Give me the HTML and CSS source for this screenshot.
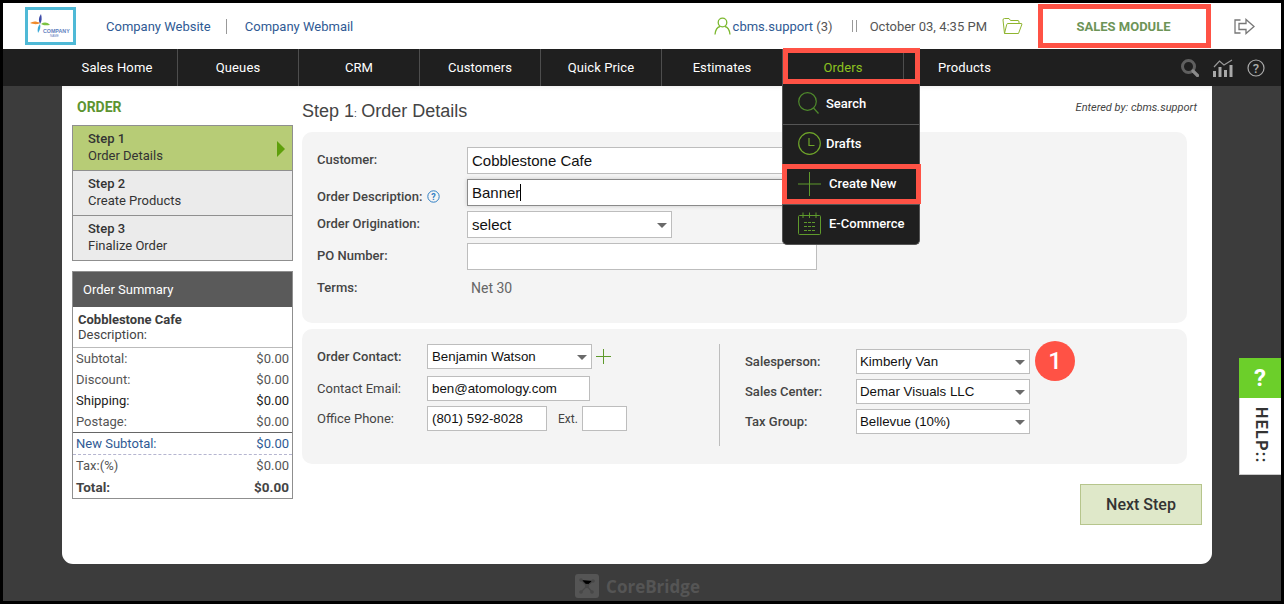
FILE: index.html
```html
<!DOCTYPE html>
<html lang="en">
<head>
<meta charset="utf-8">
<title>Order Details</title>
<link rel="stylesheet" href="styles.css">
</head>
<body>
<div class="app">
  <header class="top">
    <div class="logo">
      <svg width="45" height="32" viewBox="0 0 45 32">
        <path d="M12 14 C10 10 11 7 13 4 C14 8 14 11 12 14Z" fill="#3d4aa8"/>
        <path d="M12 13 C8 11 5 11 2 13 C5 14 9 15 12 13Z" fill="#f08a2c"/>
        <path d="M13 14 C16 12 19 12 22 15 C19 15 16 16 13 14Z" fill="#7cc242"/>
        <path d="M12 14 C13 17 12 20 10 23 C9 19 10 16 12 14Z" fill="#38a9d8"/>
        <text x="15" y="23" class="logo-a">COMPANY</text>
        <text x="22" y="27" class="logo-b">NAME</text>
      </svg>
    </div>
    <nav class="links">
      <a class="link">Company Website</a>
      <span class="link-sep"></span>
      <a class="link">Company Webmail</a>
    </nav>
    <div class="status">
      <svg class="user-ico" width="17" height="18" viewBox="0 0 17 18" fill="none" stroke="#7cb82f" stroke-width="1.3"><circle cx="8.5" cy="5.5" r="4.3"/><path d="M1 17.5 C1.5 12.5 4 10 6 9.5 M16 17.5 C15.5 12.5 13 10 11 9.5"/></svg>
      <span class="user"><span class="user-name">cbms.support</span> (3)</span>
      <span class="bars"></span>
      <span class="date">October 03, 4:35 PM</span>
      <svg class="folder" width="21" height="18" viewBox="0 0 21 18" fill="none" stroke="#8fb52f" stroke-width="1"><path d="M2.5 16.5 L1 3 Q1 1.5 2.5 1.5 H7 L8.500 3.500 H16 Q17 3.500 17 5 V6.500"/><path d="M2.500 16.500 H16.500 L20 7 Q20 6.500 19 6.500 H6 Q5 6.500 4.700 7.500Z"/></svg>
    </div>
    <div class="module">SALES MODULE</div>
    <svg class="exit" width="21" height="17" viewBox="0 0 21 17" fill="none" stroke="#777" stroke-width="1.300"><path d="M6.500 2 H1 V15 H6.500"/><path d="M5 5.500 H12 V1.500 L20 8.500 L12 15.500 V11.500 H5Z"/></svg>
  </header>

  <nav class="nav">
    <div class="nav-item">Sales Home</div>
    <div class="nav-item">Queues</div>
    <div class="nav-item">CRM</div>
    <div class="nav-item">Customers</div>
    <div class="nav-item">Quick Price</div>
    <div class="nav-item">Estimates</div>
    <div class="nav-item nav-active">Orders</div>
    <div class="nav-item nav-last">Products</div>
    <div class="nav-tools">
      <svg width="18" height="18" viewBox="0 0 18 18" fill="none"><circle cx="7.500" cy="7.500" r="6" stroke="#5f5f5f" stroke-width="3"/><path d="M12 12 L16.500 16.500" stroke="#8a8a8a" stroke-width="3.200" stroke-linecap="round"/></svg>
      <svg width="20" height="18" viewBox="0 0 20 18"><path d="M1 8 L6.500 2 L11 6 L19 1" fill="none" stroke="#999" stroke-width="1.200"/><path d="M0 12h3v6H0zM5.500 8h3v10h-3zM11 11h3v7h-3zM16.500 6h3v12h-3z" fill="#a8a8a8"/></svg>
      <svg width="18" height="18" viewBox="0 0 18 18"><circle cx="9" cy="9" r="8" fill="none" stroke="#aaa" stroke-width="1.200"/><text x="9" y="13.500" class="tool-q">?</text></svg>
    </div>
  </nav>

  <div class="stage">
    <main class="panel">
      <aside class="side">
        <h2 class="side-title">ORDER</h2>
        <div class="steps">
          <div class="step step-on"><b>Step 1</b><span>Order Details</span><i class="step-arrow"></i></div>
          <div class="step"><b>Step 2</b><span>Create Products</span></div>
          <div class="step"><b>Step 3</b><span>Finalize Order</span></div>
        </div>
        <section class="summary">
          <h3 class="sum-head">Order Summary</h3>
          <div class="sum-who"><b>Cobblestone Cafe</b><span>Description:</span></div>
          <div class="sum-rows">
            <div class="sum-row"><span>Subtotal:</span><span>$0.00</span></div>
            <div class="sum-row"><span>Discount:</span><span>$0.00</span></div>
            <div class="sum-row sum-dark"><span>Shipping:</span><span>$0.00</span></div>
            <div class="sum-row"><span>Postage:</span><span>$0.00</span></div>
            <div class="sum-row sum-new"><span>New Subtotal:</span><span>$0.00</span></div>
            <div class="sum-row"><span>Tax:(%)</span><span>$0.00</span></div>
            <div class="sum-row sum-total"><span>Total:</span><span>$0.00</span></div>
          </div>
        </section>
      </aside>
      <div class="content">
        <div class="title-row">
          <h1 class="title">Step 1<small>:</small> Order Details</h1>
          <span class="entered">Entered by: cbms.support</span>
        </div>
        <section class="box box-a">
          <div class="frow"><label class="lbl lbl-f">Customer:</label><div class="field f-wide">Cobblestone Cafe</div></div>
          <div class="frow"><label class="lbl lbl-desc">Order Description:<svg class="hint" width="13" height="13" viewBox="0 0 13 13"><circle cx="6.500" cy="6.500" r="5.700" fill="none" stroke="#2f7fc4" stroke-width="1"/><text x="6.500" y="10" class="hint-q">?</text></svg></label><div class="field f-wide f-focus">Banner<i class="caret"></i></div></div>
          <div class="frow"><label class="lbl lbl-f">Order Origination:</label><div class="field f-sel f-orig">select<i class="arrow"></i></div></div>
          <div class="frow"><label class="lbl lbl-f">PO Number:</label><div class="field f-wide"></div></div>
          <div class="frow"><label class="lbl lbl-f">Terms:</label><div class="terms">Net 30</div></div>
        </section>
        <section class="box box-b">
          <div class="col-l">
            <div class="crow"><label class="lbl lbl-c">Order Contact:</label><div class="field sm f-sel f-contact">Benjamin Watson<i class="arrow"></i></div><svg class="plus" width="15" height="15" viewBox="0 0 15 15"><path d="M7.500 0V15M0 7.500H15" stroke="#5f9a2c" stroke-width="1"/></svg></div>
            <div class="crow"><label class="lbl lbl-c lbl-n">Contact Email:</label><div class="field sm f-email">ben@atomology.com</div></div>
            <div class="crow"><label class="lbl lbl-c lbl-n">Office Phone:</label><div class="field sm f-phone">(801) 592-8028</div><span class="ext">Ext.</span><div class="field sm f-ext"></div></div>
          </div>
          <div class="col-r">
            <div class="crow"><label class="lbl lbl-r">Salesperson:</label><div class="field sm f-sel f-right">Kimberly Van<i class="arrow"></i></div></div>
            <div class="crow"><label class="lbl lbl-r">Sales Center:</label><div class="field sm f-sel f-right">Demar Visuals LLC<i class="arrow"></i></div></div>
            <div class="crow"><label class="lbl lbl-r">Tax Group:</label><div class="field sm f-sel f-right">Bellevue (10%)<i class="arrow"></i></div></div>
          </div>
        </section>
        <div class="actions"><button class="next">Next Step</button></div>
      </div>
    </main>
    <footer class="brand">
      <svg width="24" height="24" viewBox="0 0 24 24"><rect width="24" height="24" rx="3" fill="#555"/><g stroke="#474747" stroke-width="1.200"><path d="M6 6L12 12L18 7M12 12L6 18M12 12L17 18"/></g><g fill="#474747"><circle cx="6" cy="6" r="1.800"/><circle cx="18" cy="7" r="1.800"/><circle cx="12" cy="12" r="2.200"/><circle cx="6" cy="18" r="1.800"/><circle cx="17" cy="18" r="1.800"/></g></svg>
      <span>CoreBridge</span>
    </footer>
  </div>

  <div class="menu">
    <div class="menu-item mi-search"><svg width="21" height="22" viewBox="0 0 21 22" fill="none" stroke="#4f8a2c" stroke-width="1.200"><circle cx="9.500" cy="9.500" r="8.800"/><path d="M15.500 16 L20.500 21.500"/></svg><span>Search</span></div>
    <div class="menu-item mi-drafts"><svg width="23" height="23" viewBox="0 0 23 23" fill="none" stroke="#6fa52a" stroke-width="1.200"><circle cx="11.500" cy="11.500" r="10.800"/><path d="M11 6V13.500H16.500"/></svg><span>Drafts</span></div>
    <div class="menu-item mi-wide"><svg width="23" height="24" viewBox="0 0 23 24" fill="none" stroke="#5f9a2c" stroke-width="1"><path d="M11.500 0V24M0 12H23"/></svg><span>Create New</span></div>
    <div class="menu-item mi-wide"><svg width="23" height="23" viewBox="0 0 23 23" fill="none" stroke="#5f9a2c" stroke-width="1"><rect x="0.500" y="3.500" width="22" height="19" rx="1"/><path d="M5 0.500V6M11.500 0.500V6M18 0.500V6"/><path d="M6 10.500h3M10 10.500h3M14 10.500h3M6 14.500h3M10 14.500h3M14 14.500h3M6 18.500h3M10 18.500h3M14 18.500h3"/></svg><span>E-Commerce</span></div>
  </div>

  <div class="mark mark-module"></div>
  <div class="mark mark-orders"></div>
  <div class="mark mark-create"></div>
  <div class="badge">1</div>
  <div class="help"><div class="help-q">?</div><div class="help-t"><span>HELP::</span></div></div>
</div>
</body>
</html>
```
FILE: styles.css
```css
* { box-sizing: border-box; }
html, body { margin: 0; height: 100%; overflow: hidden; }
body { background: #000; font-family: Roboto, "Liberation Sans", sans-serif; }
.app { position: relative; width: 1278px; height: 598px; margin: 3px 0 0 3px; background: #3c3c3c; display: flex; flex-direction: column; }

.top { height: 46px; background: #fff; display: flex; align-items: center; flex: none; }
.logo { width: 51px; height: 38px; margin-left: 22px; border: 3px solid #4fb9d6; display: flex; align-items: center; justify-content: center; background: #fff; }
.logo-a { font: 700 5.300px "Liberation Sans", sans-serif; fill: #5f7fc0; }
.logo-b { font: 3px "Liberation Sans", sans-serif; fill: #5f7fc0; }
.links { display: flex; align-items: center; margin-left: 30px; }
.link { font-size: 13px; color: #2f5a94; }
.link-sep { width: 1px; height: 15px; background: #999; margin: 0 18px 0 15px; }
.status { display: flex; align-items: center; margin-left: auto; font-size: 13px; color: #555; }
.user-ico { margin-right: 2px; }
.user { color: #555; }
.user-name { color: #2f5a94; }
.bars { width: 5px; height: 12px; border-left: 1px solid #999; border-right: 1px solid #999; margin: 0 13px 0 19px; }
.date { margin-right: 15px; }
.module { width: 173px; margin-left: 14px; padding-top: 1px; text-align: center; font-size: 13px; font-weight: 700; color: #6d9457; }
.exit { margin: 0 26px 0 24px; }

.nav { height: 37px; background: #1f1f1f; display: flex; align-items: center; padding-left: 54px; flex: none; position: relative; z-index: 2; }
.nav-item { width: 121px; height: 37px; line-height: 37px; text-align: center; font-size: 13px; font-weight: 400; letter-spacing: .1px; color: #fff; border-right: 1px solid #4d4d4d; }
.nav-last { border-right: 0; }
.nav-active { color: #8dc21f; }
.nav-tools { margin-left: auto; display: flex; align-items: center; gap: 14px; padding-right: 16px; }
.nav-tools svg { display: block; }
.tool-q { font: 500 13px Roboto, sans-serif; fill: #aaa; text-anchor: middle; }

.stage { flex: 1; display: flex; flex-direction: column; align-items: center; min-height: 0; }
.panel { width: 1150px; height: 478px; margin-right: 10px; background: #fff; border-radius: 0 0 11px 11px; display: flex; padding-left: 10px; flex: none; box-shadow: inset 0 4px 4px -3px rgba(0,0,0,.08); }
.side { width: 221px; flex: none; }
.side-title { margin: 12px 0 9px 5px; height: 18px; line-height: 18px; font-size: 14px; font-weight: 700; color: #5d9431; }
.steps { border: 1px solid #8f8f8f; background: #ebebeb; }
.step { position: relative; height: 45px; padding: 4px 15px 0; border-top: 1px solid #8f8f8f; font-size: 13px; line-height: 17px; color: #333; }
.step:first-child { border-top: 0; height: 44px; }
.step b { display: block; font-weight: 500; }
.step span { display: block; }
.step-on { background: #b7cc76; }
.step-arrow { position: absolute; right: 7px; top: 15px; border-left: 8px solid #5e9f0b; border-top: 8px solid transparent; border-bottom: 8px solid transparent; }
.summary { margin-top: 10px; border: 1px solid #8f8f8f; height: 228px; }
.sum-head { margin: 0; height: 35px; line-height: 35px; padding-left: 10px; background: #5a5a5a; color: #fff; font-size: 13px; font-weight: 400; }
.sum-who { height: 41px; padding: 5px 5px 0; border-bottom: 1px solid #bbb; font-size: 13px; line-height: 15px; color: #444; }
.sum-who b { display: block; font-weight: 700; color: #3c3c3c; }
.sum-who span { display: block; }
.sum-rows { padding: 0; }
.sum-row { display: flex; justify-content: space-between; height: 21px; line-height: 21px; padding: 0 3px; font-size: 13px; color: #555; }
.sum-dark { color: #222; }
.sum-new { height: 23px; line-height: 22px; border-top: 1px solid #666; border-bottom: 1px dashed #b5b5d0; color: #2f5a94; }
.sum-row:last-child { font-weight: 700; font-size: 13.500px; color: #444; height: 22px; line-height: 22px; }

.content { flex: none; width: 900px; margin-left: 9px; }
.title-row { height: 46px; display: flex; justify-content: space-between; padding-top: 15px; }
.title { margin: 0; font: 400 18px/20px "Liberation Sans", Arial, sans-serif; color: #444; }
.title small { font-size: 10px; margin-right: -.6px; }
.entered { margin-right: 5px; font-size: 11px; font-style: italic; color: #444; line-height: 14px; }
.box { width: 885px; background: #f4f4f4; border-radius: 10px; }
.box-a { height: 191px; padding: 15px 15px 0; display: flex; flex-direction: column; gap: 5px; }
.frow { display: flex; align-items: center; height: 27px; }
.lbl { display: flex; align-items: center; gap: 5px; width: 150px; flex: none; font-size: 13px; font-weight: 500; color: #444; }
.lbl-f { padding-bottom: 2px; }
.lbl-desc { padding-top: 7px; }
.hint-q { font: 700 9px Roboto, sans-serif; fill: #2f7fc4; text-anchor: middle; }
.field { position: relative; height: 27px; border: 1px solid #bdbdbd; background: #fff; padding: 0 4px; font: 15px/26px "Liberation Sans", Arial, sans-serif; color: #111; }
.f-wide { width: 350px; }
.f-focus { border-color: #8a8a8a; box-shadow: 0 0 4px rgba(0,0,0,.18); }
.caret { display: inline-block; width: 1px; height: 17px; background: #000; vertical-align: -3px; }
.f-orig { width: 205px; }
.arrow { position: absolute; right: 4px; top: 50%; margin-top: -2px; border-top: 5px solid #6a6a6a; border-left: 5px solid transparent; border-right: 5px solid transparent; }
.terms { margin-left: 4px; padding-bottom: 2px; font-size: 14px; color: #666; }
.box-b { height: 135px; margin-top: 6px; display: flex; padding: 15px 0 0 15px; }
.col-l { width: 403px; height: 102px; border-right: 1px solid #bdbdbd; }
.col-l .crow:nth-child(2) { margin-top: 7px; }
.col-l .crow:nth-child(3) { margin-top: 5px; }
.col-r { padding: 5px 0 0 25px; display: flex; flex-direction: column; gap: 5px; }
.crow { display: flex; align-items: center; height: 25px; }
.lbl-c { width: 110px; }
.lbl-n { font-weight: 400; }
.lbl-r { width: 111px; }
.field.sm { height: 25px; font-size: 13.300px; line-height: 23px; }
.f-contact { width: 165px; }
.f-email { width: 163px; }
.f-phone { width: 120px; }
.f-ext { width: 45px; }
.field.f-right { width: 174px; padding-left: 3px; }
.plus { margin-left: 4px; }
.ext { width: 35px; padding-left: 11px; font-size: 12px; color: #444; }
.actions { display: flex; justify-content: flex-end; width: 900px; margin-top: 20px; }
.next { width: 122px; height: 41px; background: #dfe8c9; border: 1px solid #b6c58c; font: 500 16px Roboto, sans-serif; color: #333; padding: 0; }

.brand { display: flex; align-items: center; gap: 7px; height: 24px; margin-top: 10px; margin-left: -9px; color: #555; font: 700 17px "Open Sans", sans-serif; }

.menu { position: absolute; left: 779px; top: 81px; width: 138px; height: 161px; background: #1f1f1f; border: 1px solid #555; border-top: 0; border-radius: 0 0 5px 5px; z-index: 3; }
.menu-item { height: 40px; display: flex; align-items: center; padding: 0 0 2px 15px; color: #fff; font-size: 13px; font-weight: 500; border-top: 1px solid #555; }
.menu-item:first-child { border-top: 0; }
.mi-search { gap: 7px; }
.mi-drafts { gap: 5px; }
.mi-wide { gap: 8px; }
.mark { position: absolute; border: 5px solid #ff5245; z-index: 4; }
.mark-module { left: 1035px; top: 1px; width: 173px; height: 44px; }
.mark-orders { left: 780px; top: 45px; width: 137px; height: 36px; }
.mark-create { left: 779px; top: 161px; width: 139px; height: 40px; }
.badge { position: absolute; left: 1032px; top: 338px; width: 40px; height: 40px; border-radius: 50%; background: #ff5245; color: #fff; font: 500 24px/40px Roboto, sans-serif; text-align: center; z-index: 4; }
.help { position: absolute; left: 1236px; top: 355px; width: 42px; height: 117px; background: #fff; border: 1px solid #ccc; border-right: 0; }
.help-q { height: 40px; background: #6ccf2a; color: #fff; font: 700 24px/40px Roboto, sans-serif; text-align: center; margin: -1px 0 0 -1px; }
.help-t { display: flex; justify-content: center; padding-top: 9px; }
.help-t span { writing-mode: vertical-rl; font: 700 16px/1 Roboto, sans-serif; color: #333; letter-spacing: 1.400px; }
```
